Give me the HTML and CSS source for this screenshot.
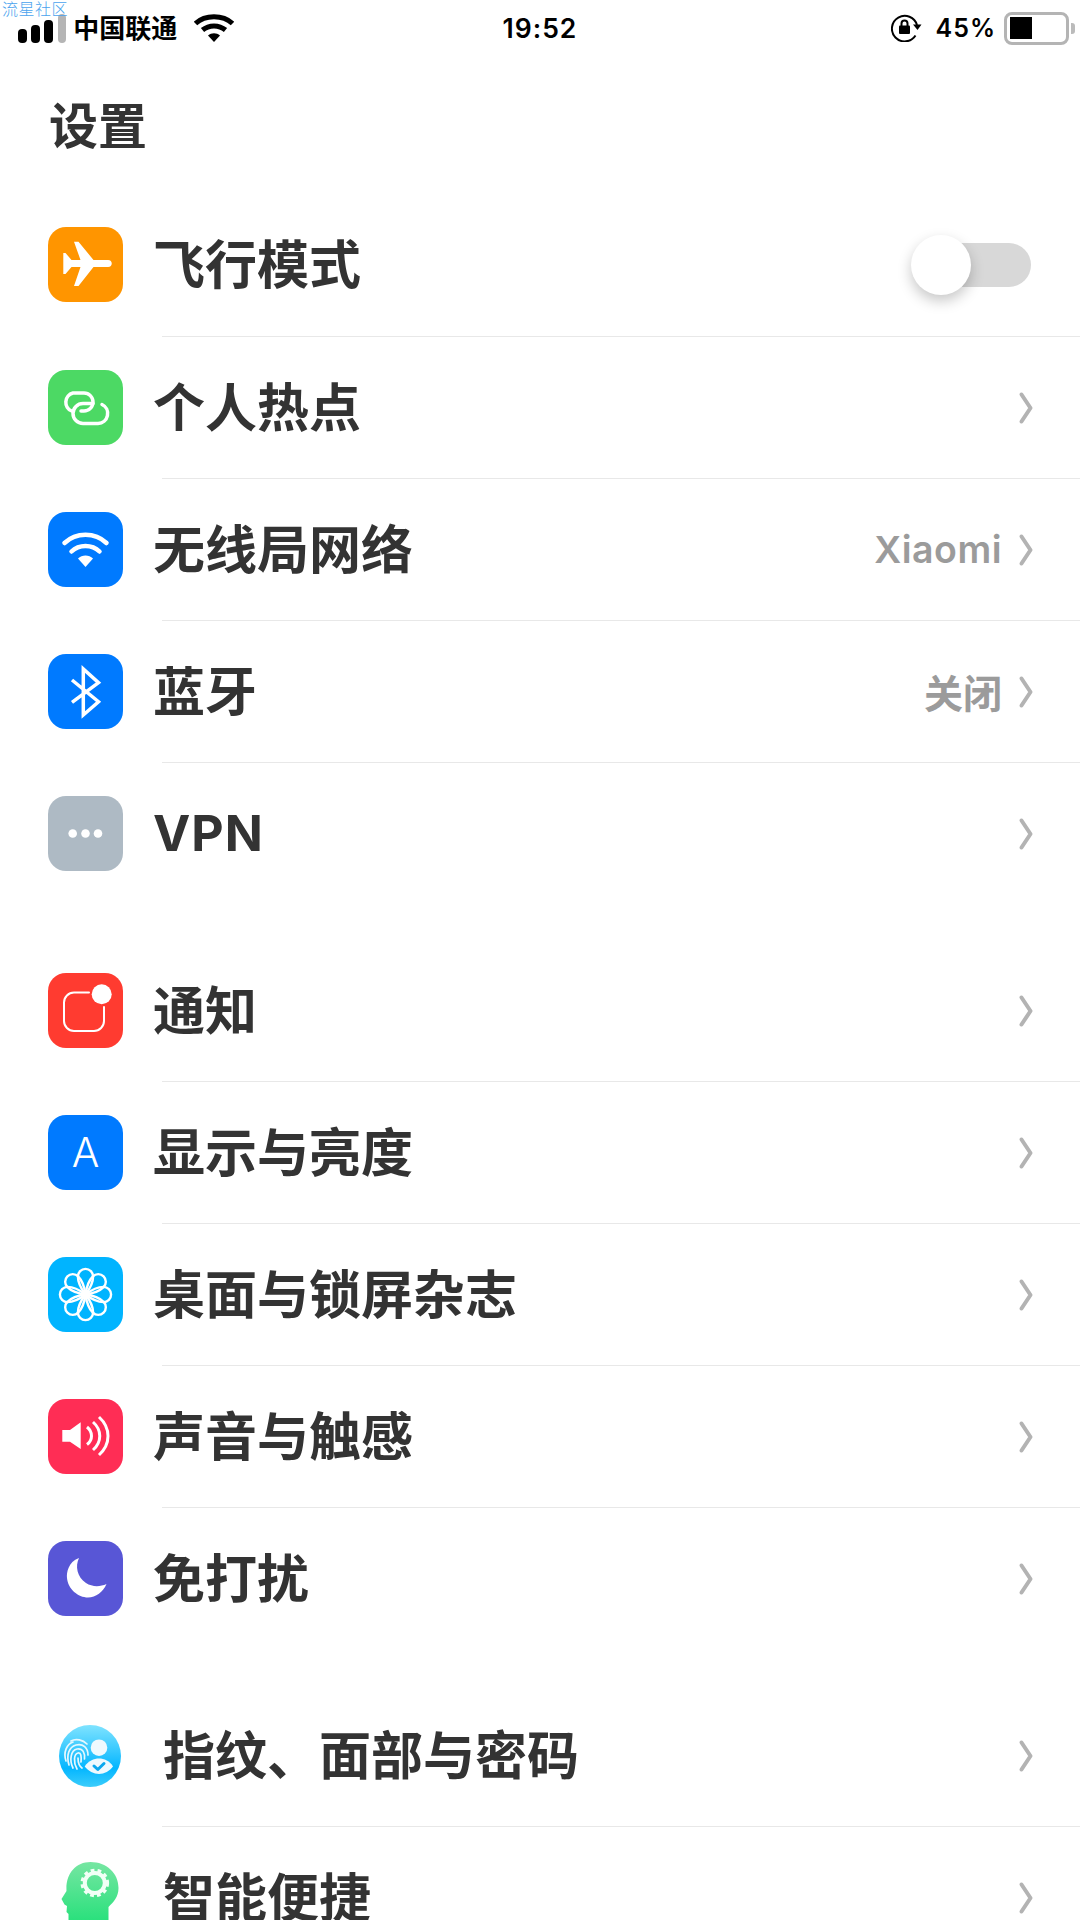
FILE: index.html
```html
<!DOCTYPE html>
<html lang="zh-CN">
<head>
<meta charset="utf-8">
<title>设置</title>
<link rel="stylesheet" href="styles.css">
</head>
<body>
<div class="watermark">流星社区</div>
<header class="status">
  <div class="status-left">
    <div class="signal"><i class="b1"></i><i class="b2"></i><i class="b3"></i><i class="b4"></i></div>
    <span class="carrier">中国联通</span>
    <svg class="st-wifi" viewBox="0 0 40 28"><path d="M1.500 9.500C11 .5 29 .5 38.500 9.500" class="wf"/><path d="M8.500 16C15 10.500 25 10.500 31.500 16" class="wf"/><path d="M14 21.500C17.500 18.500 22.500 18.500 26 21.500L20 28Z" class="wfill"/></svg>
  </div>
  <div class="time">19:52</div>
  <div class="status-right">
    <svg class="st-lock" viewBox="0 0 31 28"><path d="M24.500 21.500A12.800 12.800 0 1 1 26 11" class="lk"/><path d="M22 10.500H30.500L26.500 16Z" class="lkf"/><rect x="8" y="11.500" width="11" height="8.500" rx="1" class="lkf"/><path d="M10.500 12V9.500a3 3 0 0 1 6 0V12" class="lk"/></svg>
    <span class="pct">45%</span>
    <div class="battery"><div class="cell"><div class="charge"></div></div><div class="nub"></div></div>
  </div>
</header>

<h1 class="title">设置</h1>

<main>
<section class="group">
  <div class="row row-first">
    <div class="icon c-orange"><svg viewBox="0 0 75 75"><path class="fw" d="M60 33H45.500L30.500 14.700H26L32.500 33H23.500L17.500 26H15.300V47H17.500L23.500 40H32.500L26 59H30.500L45.500 40H60C65 40 65 33 60 33Z"/></svg></div>
    <span class="label">飞行模式</span>
    <div class="toggle"><div class="thumb"></div></div>
  </div>
  <div class="divider"></div>
  <div class="row">
    <div class="icon c-green"><svg viewBox="0 0 75 75"><path class="sw s35" d="M23.700 41A9.500 9.500 0 0 1 25 23H36A9 9 0 0 1 36 41H33"/><path class="sw s35" d="M45 33.500H35A10 10 0 0 0 35 53.500H50A10 10 0 0 0 54 34.500"/></svg></div>
    <span class="label">个人热点</span>
    <svg class="chev" viewBox="0 0 12 30"><path d="M1.500 1.500L10.500 15L1.500 28.500"/></svg>
  </div>
  <div class="divider"></div>
  <div class="row">
    <div class="icon c-blue"><svg viewBox="0 0 75 75"><path class="sw s45" d="M16.500 31C28 20 47 20 58.500 31"/><path class="sw s45" d="M23.500 39.500C31 32 44 32 51.500 39.500"/><path class="fw" d="M30 46.500C34 42.500 41 42.500 45 46.500L37.500 55Z"/></svg></div>
    <span class="label">无线局网络</span>
    <span class="value value-latin">Xiaomi</span>
    <svg class="chev" viewBox="0 0 12 30"><path d="M1.500 1.500L10.500 15L1.500 28.500"/></svg>
  </div>
  <div class="divider"></div>
  <div class="row">
    <div class="icon c-blue"><svg viewBox="0 0 75 75"><path class="sw s35 miter" d="M24 26L50.500 47.700L35.300 61V15L50.500 28.700L24 48.300"/></svg></div>
    <span class="label">蓝牙</span>
    <span class="value">关闭</span>
    <svg class="chev" viewBox="0 0 12 30"><path d="M1.500 1.500L10.500 15L1.500 28.500"/></svg>
  </div>
  <div class="divider"></div>
  <div class="row">
    <div class="icon c-gray"><svg viewBox="0 0 75 75"><circle class="fw" cx="24.700" cy="37.500" r="4.300"/><circle class="fw" cx="37.500" cy="37.500" r="4.300"/><circle class="fw" cx="50" cy="37.500" r="4.300"/></svg></div>
    <span class="label label-latin">VPN</span>
    <svg class="chev" viewBox="0 0 12 30"><path d="M1.500 1.500L10.500 15L1.500 28.500"/></svg>
  </div>
</section>

<section class="group">
  <div class="row">
    <div class="icon c-red"><svg viewBox="0 0 75 75"><path class="sw s2" d="M41 19.500H26A10 10 0 0 0 16 29.500V48A10 10 0 0 0 26 58H46A10 10 0 0 0 56 48V34"/><circle class="fw" cx="53.700" cy="21.300" r="10"/></svg></div>
    <span class="label">通知</span>
    <svg class="chev" viewBox="0 0 12 30"><path d="M1.500 1.500L10.500 15L1.500 28.500"/></svg>
  </div>
  <div class="divider"></div>
  <div class="row">
    <div class="icon c-blue"><span class="icon-a">A</span></div>
    <span class="label">显示与亮度</span>
    <svg class="chev" viewBox="0 0 12 30"><path d="M1.500 1.500L10.500 15L1.500 28.500"/></svg>
  </div>
  <div class="divider"></div>
  <div class="row">
    <div class="icon c-cyan"><svg viewBox="0 0 75 75"><defs><path id="petal" d="M37.500 37.500C32.500 31 29.900 24 29.900 19.500A7.600 7.600 0 0 1 45.100 19.500C45.100 24 42.500 31 37.500 37.500Z"/></defs><g class="sw s24"><use href="#petal"/><use href="#petal" transform="rotate(45 37.500 37.500)"/><use href="#petal" transform="rotate(90 37.500 37.500)"/><use href="#petal" transform="rotate(135 37.500 37.500)"/><use href="#petal" transform="rotate(180 37.500 37.500)"/><use href="#petal" transform="rotate(225 37.500 37.500)"/><use href="#petal" transform="rotate(270 37.500 37.500)"/><use href="#petal" transform="rotate(315 37.500 37.500)"/></g><circle class="fw" cx="37.500" cy="37.500" r="2.200"/></svg></div>
    <span class="label">桌面与锁屏杂志</span>
    <svg class="chev" viewBox="0 0 12 30"><path d="M1.500 1.500L10.500 15L1.500 28.500"/></svg>
  </div>
  <div class="divider"></div>
  <div class="row">
    <div class="icon c-pink"><svg viewBox="0 0 75 75"><path class="fw" d="M14.300 31H22L32.700 23.300V50L22 42.700H14.300Z"/><path class="sw butt" d="M39 28C45 33 45 41 39 45.500"/><path class="sw butt" d="M45 23C54 31 54 43 45 51"/><path class="sw butt" d="M51 18C63 29 63 45 51 56"/></svg></div>
    <span class="label">声音与触感</span>
    <svg class="chev" viewBox="0 0 12 30"><path d="M1.500 1.500L10.500 15L1.500 28.500"/></svg>
  </div>
  <div class="divider"></div>
  <div class="row">
    <div class="icon c-indigo"><svg viewBox="0 0 75 75"><path class="fw" d="M31 17C20 21 18.500 32 19 37C20 48 30 56.500 40 56.500C48 56.500 55 51 58.500 43C52 46 44 46 38 42C29 36 27 25 31 17Z"/></svg></div>
    <span class="label">免打扰</span>
    <svg class="chev" viewBox="0 0 12 30"><path d="M1.500 1.500L10.500 15L1.500 28.500"/></svg>
  </div>
</section>

<section class="group">
  <div class="row row-app">
    <div class="app-icon"><svg viewBox="0 0 62 62"><defs><linearGradient id="fpg" x1="0" y1="0" x2="0" y2="1"><stop offset="0" stop-color="#7fe3ff"/><stop offset=".7" stop-color="#04b6ff"/><stop offset="1" stop-color="#3ccdfb"/></linearGradient></defs><circle cx="31" cy="31" r="31" fill="url(#fpg)"/><g class="sw s15 fp"><path d="M7 36C4 27 8 19 14 17"/><path d="M10 40C7 30 10 22 17 20C24 18 29 23 29 30"/><path d="M14 43C10 35 12 25 18 24C24 23 26 28 25.500 34"/><path d="M18 44C14 37 15 29 19 28C22 27.500 22.500 31 22 37"/><path d="M12 16C17 13 24 15 28 19"/><path d="M19 33C19 37 20 41 23 43"/></g><circle cx="40" cy="22.700" r="8.300" fill="#eef9fe"/><path d="M25.700 41.500C29 36 35 33.500 40 33.500C45 33.500 51 36 54 41.500C51 46 45 49 40 49C35 49 29 46 25.700 41.500Z" fill="#eef9fe"/><path class="check" d="M35 41L38.800 44.500L45 38.500"/></svg></div>
    <span class="label">指纹、面部与密码</span>
    <svg class="chev" viewBox="0 0 12 30"><path d="M1.500 1.500L10.500 15L1.500 28.500"/></svg>
  </div>
  <div class="divider"></div>
  <div class="row row-app">
    <div class="app-icon app-icon-tall"><svg viewBox="-1.500 -2 62 75"><defs><linearGradient id="hdg" x1="0" y1="0" x2="0" y2="1"><stop offset="0" stop-color="#76e6a2"/><stop offset="1" stop-color="#15df72"/></linearGradient></defs><path fill="url(#hdg)" d="M30 0C46 0 58 11 58 26C58 35 53 40 48 45V75H8V52L6 50L6.500 44L4 42.500L1 37L6 29C5 12 15 0 30 0Z"/><circle class="gear-teeth" cx="34.300" cy="21" r="12.300"/><circle class="gear-ring" cx="34.300" cy="21" r="10"/></svg></div>
    <span class="label">智能便捷</span>
    <svg class="chev" viewBox="0 0 12 30"><path d="M1.500 1.500L10.500 15L1.500 28.500"/></svg>
  </div>
</section>
</main>
</body>
</html>
```
FILE: styles.css
```css
* { box-sizing: border-box; }
html, body { margin: 0; height: 1920px; overflow: hidden; background: #fff; }
body {
  position: relative;
  font-family: "Noto Sans CJK SC", "Noto Sans", sans-serif;
  color: #333;
}
svg { display: block; }

.watermark {
  position: absolute; left: 2px; top: 0;
  font-size: 16px; line-height: 16px; letter-spacing: .5px;
  font-weight: 300; color: #4aa3ee;
}

.status {
  display: grid; grid-template-columns: 1fr auto 1fr; align-items: center;
  height: 56px; color: #000;
}
.status-left { display: flex; align-items: center; padding-left: 18px; }
.signal { display: flex; align-items: flex-end; gap: 4.6px; height: 30px; margin-top: -1px; }
.signal i { display: block; width: 8.600px; border-radius: 4px; background: #000; }
.signal .b1 { height: 14px; }
.signal .b2 { height: 18px; }
.signal .b3 { height: 23px; }
.signal .b4 { height: 29px; background: #b5b5b5; }
.carrier { margin: -2px 0 0 7px; font-size: 26px; font-weight: 700; line-height: 36px; }
.st-wifi { width: 40px; height: 28px; margin-left: 17px; }
.wf { fill: none; stroke: #000; stroke-width: 5; }
.wfill { fill: #000; }
.time { font-family: Inter, sans-serif; font-size: 26.500px; font-weight: 600; letter-spacing: 1px; }
.status-right { display: flex; align-items: center; justify-content: flex-end; padding-right: 5px; }
.st-lock { width: 31px; height: 28px; }
.lk { fill: none; stroke: #000; stroke-width: 2; }
.lkf { fill: #000; }
.pct { margin-left: 14px; font-family: Inter, sans-serif; font-size: 25px; font-weight: 600; letter-spacing: 1px; }
.battery { display: flex; align-items: center; margin-left: 8px; }
.cell { width: 65px; height: 33px; padding: 2.500px; border: 3px solid #b4b4b4; border-radius: 8px; }
.charge { width: 22px; height: 100%; background: #000; }
.nub { width: 4px; height: 11px; background: #bbb; border-radius: 0 3px 3px 0; margin-left: 2px; }

.title { margin: 33px 0 0 49px; font-size: 49px; line-height: 68px; font-weight: 700; }

main { margin-top: 37px; }
.group { margin-bottom: 36px; }
.row { display: flex; align-items: center; height: 141px; padding: 0 48px; }
.row-first { height: 142px; padding-bottom: 1px; }
.divider { height: 1px; margin-left: 162px; background: #e8e8e8; }
.icon { position: relative; flex: none; display: flex; align-items: center; justify-content: center; width: 75px; height: 75px; border-radius: 18px; }
.icon svg { width: 75px; height: 75px; }
.c-orange { background: #ff9500; }
.c-green { background: #4cd964; }
.c-blue { background: #007aff; }
.c-gray { background: #aebac4; }
.c-red { background: #ff3b30; }
.c-cyan { background: #00b4ff; }
.c-pink { background: #ff2d55; }
.c-indigo { background: #5856d6; }
.icon-a { font-family: Inter, sans-serif; font-size: 41px; font-weight: 300; color: #fff; line-height: 1; }
.fw { fill: #fff; }
.sw { fill: none; stroke: #fff; stroke-linecap: round; stroke-linejoin: round; }
.s2 { stroke-width: 2; }
.s24 { stroke-width: 2.400; }
.s35 { stroke-width: 3.500; }
.s45 { stroke-width: 4.500; }
.s15 { stroke-width: 1.700; }
.butt { stroke-linecap: butt; stroke-width: 3; }
.miter { stroke-linejoin: miter; stroke-linecap: butt; }
.fp { stroke: #e6f8ff; }
.check { fill: none; stroke: #0aa7ee; stroke-width: 3; stroke-linecap: round; stroke-linejoin: round; }
.gear-teeth { fill: none; stroke: #f2fff6; stroke-width: 4; stroke-dasharray: 3.600 3.100; }
.gear-ring { fill: none; stroke: #f2fff6; stroke-width: 4; }

.label { margin-left: 30px; padding-bottom: 6px; font-size: 52px; line-height: 75px; font-weight: 700; white-space: nowrap; }
.label-latin { padding-bottom: 0; font-family: Inter, sans-serif; font-size: 50px; font-weight: 700; letter-spacing: 1px; }
.value { margin-left: auto; padding-bottom: 2px; font-size: 39px; font-weight: 600; color: #9b9b9b; }
.value-latin { padding-bottom: 0; font-family: Inter, sans-serif; font-size: 37.500px; letter-spacing: .5px; }
.chev { flex: none; width: 12px; height: 30px; margin-left: auto; overflow: visible; }
.value + .chev { margin-left: 18px; }
.chev path { fill: none; stroke: #b3b3b3; stroke-width: 4; stroke-linecap: round; stroke-linejoin: round; }

.toggle { position: relative; margin: 0 1px 0 auto; width: 96px; height: 44px; border-radius: 22px; background: #d8d8d8; }
.thumb { position: absolute; left: -24px; top: -8px; width: 60px; height: 60px; border-radius: 50%; background: #fff; box-shadow: 0 6px 14px rgba(0,0,0,.22); }

.row-app { padding-left: 59px; }
.app-icon { flex: none; width: 62px; height: 62px; }
.app-icon svg { width: 62px; height: auto; }
.app-icon-tall { height: 75px; }
.row-app .label { margin-left: 42px; }
```
